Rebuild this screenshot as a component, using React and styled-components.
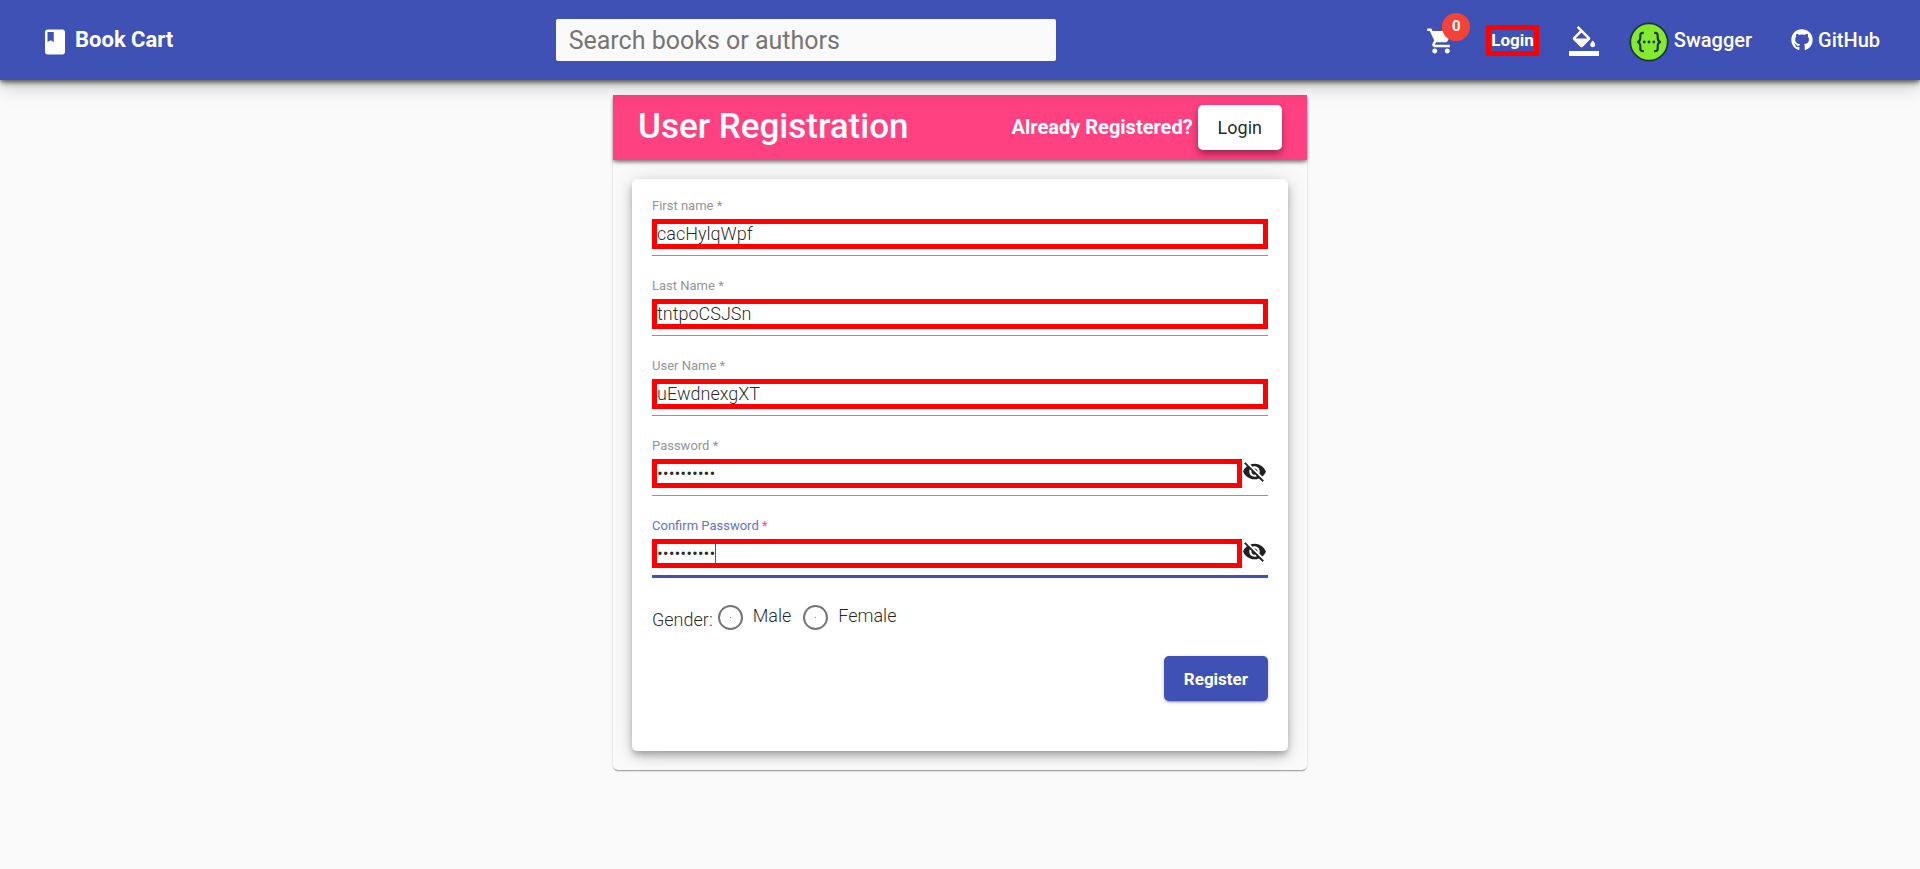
import React from 'react';
import styled, { createGlobalStyle, css } from 'styled-components';
import { MdShoppingCart, MdVisibilityOff } from 'react-icons/md';
import { FaGithub } from 'react-icons/fa';

const indigo = '#3f51b5';
const pink = '#ff4081';
const ink = 'rgba(0, 0, 0, 0.87)';

const GlobalStyle = createGlobalStyle`
  *, *::before, *::after { box-sizing: border-box; }
  body {
    margin: 0;
    background: #fafafa;
    color: ${ink};
    font: 300 18px/24px Roboto, "Liberation Sans", sans-serif;
  }
  button, input { font: inherit; color: inherit; }
`;

const Toolbar = styled.header`
  position: relative;
  z-index: 1;
  display: flex;
  align-items: center;
  justify-content: space-between;
  gap: 20px;
  min-height: 80px;
  padding: 0 40px;
  background: ${indigo};
  color: #fff;
  font-weight: 500;
  box-shadow:
    0 4px 6px -1px rgba(0, 0, 0, 0.4),
    0 2px 3px rgba(0, 0, 0, 0.3),
    0 8px 18px rgba(0, 0, 0, 0.16);
`;

const Brand = styled.a`
  display: flex;
  align-items: center;
  gap: 5px;
  width: 145px;
  color: inherit;
  font-size: 22px;
  font-weight: 700;
  text-decoration: none;
  white-space: nowrap;

  svg { margin-top: 4px; }
`;

const Search = styled.input`
  flex: 0 1 500px;
  min-width: 0;
  height: 42px;
  padding: 0 13px;
  border: 0;
  border-radius: 2px;
  background: #fafafa;
  color: ${ink};
  font-size: 25px;
  font-weight: 400;

  &::placeholder { color: #757575; opacity: 1; }
`;

const Nav = styled.nav`
  display: flex;
  align-items: center;
  gap: 30px;
`;

const IconButton = styled.button`
  position: relative;
  display: flex;
  padding: 2px 0 0;
  border: 0;
  background: none;
  cursor: pointer;
`;

const Badge = styled.span`
  position: absolute;
  top: -11px;
  left: 16px;
  width: 28px;
  height: 28px;
  border-radius: 50%;
  background: #f44336;
  font-size: 15px;
  font-weight: 700;
  line-height: 26px;
  text-align: center;
`;

const highlight = css`
  border: 5px solid #f00;
`;

const NavLogin = styled.a`
  ${highlight}
  color: inherit;
  font-size: 17px;
  font-weight: 700;
  line-height: 21px;
  text-decoration: none;
`;

const NavLink = styled.a`
  display: flex;
  align-items: center;
  gap: 5px;
  padding-right: ${(p) => (p.$spaced ? 9 : 0)}px;
  color: inherit;
  font-size: 20px;
  text-decoration: none;
`;

const Card = styled.main`
  width: calc(100% - 32px);
  max-width: 694px;
  margin: 15px auto 20px;
  padding-bottom: 19px;
  border-radius: 5px;
  box-shadow:
    0 2px 1px -1px rgba(0, 0, 0, 0.2),
    0 1px 1px rgba(0, 0, 0, 0.14),
    0 1px 3px rgba(0, 0, 0, 0.12);
`;

const CardHeader = styled.div`
  display: flex;
  flex-wrap: wrap;
  align-items: center;
  justify-content: space-between;
  min-height: 65px;
  padding: 0 25px;
  background: ${pink};
  color: #fff;
  box-shadow:
    0 4px 5px -2px rgba(0, 0, 0, 0.3),
    0 2px 3px rgba(0, 0, 0, 0.3);
`;

const Title = styled.h1`
  margin: 0;
  padding-bottom: 2px;
  font-size: 35px;
  font-weight: 500;
  line-height: 40px;
`;

const Existing = styled.div`
  display: flex;
  align-items: center;
  gap: 5px;
  font-size: 20px;
  font-weight: 700;
`;

const Prompt = styled.span`
  padding-bottom: 2px;
`;

const Button = styled.button`
  height: 45px;
  padding: 0 20px;
  border: 0;
  border-radius: 5px;
  background: ${(p) => (p.$primary ? indigo : '#fff')};
  color: ${(p) => (p.$primary ? '#fff' : ink)};
  font-size: ${(p) => (p.$primary ? 17 : 18)}px;
  font-weight: ${(p) => (p.$primary ? 700 : 400)};
  cursor: pointer;
  box-shadow: ${(p) =>
    p.$primary
      ? '0 3px 1px -2px rgba(0,0,0,.2), 0 2px 2px rgba(0,0,0,.14), 0 1px 5px rgba(0,0,0,.12)'
      : '0 4px 6px -1px rgba(0,0,0,.3), 0 5px 10px rgba(0,0,0,.16)'};
`;

const Form = styled.form`
  margin: 19px 19px 0;
  padding: 16px 20px 50px;
  border-radius: 5px;
  background: #fff;
  box-shadow:
    0 4px 6px -1px rgba(0, 0, 0, 0.22),
    0 6px 12px rgba(0, 0, 0, 0.15),
    0 1px 22px rgba(0, 0, 0, 0.12);
`;

const Field = styled.div`
  height: 80px;
`;

const Label = styled.label`
  display: block;
  height: 24px;
  font-size: 13px;
  font-weight: 400;
  line-height: 22px;
  color: ${(p) => (p.$active ? '#6472c4' : '#949494')};

  span { color: ${(p) => (p.$active ? pink : 'inherit')}; }
`;

const FieldRow = styled.div`
  position: relative;
  display: flex;
  align-items: flex-start;
  height: ${(p) => (p.$active ? 39 : 37)}px;
  border-bottom: ${(p) => (p.$active ? `3px solid ${indigo}` : '1px solid #949494')};
`;

const FieldInput = styled.input`
  ${highlight}
  flex: 1;
  min-width: 0;
  height: ${(p) => (p.$secret ? 29 : 30)}px;
  padding: 0 0 1px;
  border-radius: 0;
  outline: 0;
  background: #fff;
`;

const Toggle = styled.button`
  display: flex;
  width: 26px;
  padding: 0;
  border: 0;
  background: none;
  cursor: pointer;
`;

const Caret = styled.span`
  position: absolute;
  top: 5px;
  left: 63px;
  width: 1px;
  height: 19px;
  background: ${indigo};
`;

const Gender = styled.fieldset`
  display: flex;
  align-items: center;
  margin: 0;
  padding: 5px 0 0;
  border: 0;
`;

const GenderText = styled.span`
  padding: 8px 5px 0 0;
`;

const Option = styled.label`
  display: flex;
  align-items: center;
  gap: 10px;
  margin-right: 12px;
`;

const Radio = styled.input`
  appearance: none;
  display: grid;
  place-items: center;
  width: 25px;
  height: 25px;
  margin: 2px 0 0;
  border: 2px solid #757575;
  border-radius: 50%;

  &::after {
    content: "";
    width: 1px;
    height: 1px;
    background: ${pink};
  }
  &:checked::after {
    width: 13px;
    height: 13px;
    border-radius: 50%;
  }
`;

const Actions = styled.div`
  display: flex;
  justify-content: flex-end;
  padding-top: 24px;
`;

function BookIcon() {
  return (
    <svg width="30" height="30" viewBox="0 0 24 24" fill="currentColor" aria-hidden="true">
      <path d="M18 2H6c-1.1 0-2 .9-2 2v16c0 1.1.9 2 2 2h12c1.1 0 2-.9 2-2V4c0-1.1-.9-2-2-2zM6 4h5v8l-2.5-1.5L6 12V4z" />
    </svg>
  );
}

function FillIcon() {
  return (
    <svg width="30" height="30" viewBox="0 0 24 24" fill="currentColor" aria-hidden="true">
      <path d="M16.56 8.94L7.62 0 6.21 1.41l2.38 2.38-5.15 5.15c-.59.59-.59 1.54 0 2.12l5.5 5.5c.29.29.68.44 1.06.44s.77-.15 1.06-.44l5.5-5.5c.59-.58.59-1.53 0-2.12zM5.21 10L10 5.21 14.79 10H5.21zM19 11.5s-2 2.17-2 3.5c0 1.1.9 2 2 2s2-.9 2-2c0-1.33-2-3.5-2-3.5zM0 20h24v4H0z" />
    </svg>
  );
}

const SwaggerMark = styled.svg`
  margin-top: 4px;
`;

function SwaggerIcon() {
  return (
    <SwaggerMark width="40" height="40" viewBox="0 0 40 40" aria-hidden="true">
      <circle cx="20" cy="20" r="18.7" fill="#85ea2d" stroke="#173647" strokeWidth="1.8" />
      <g fill="none" stroke="#173647" strokeWidth="2.2">
        <path d="M14.8 10.8C11.5 10.6 11.2 12 11.3 14.5C11.5 17.8 11 19.6 8.3 20C11 20.4 11.5 22.2 11.3 25.5C11.2 28 11.5 29.4 14.8 29.2" />
        <path d="M25.2 10.8C28.5 10.6 28.8 12 28.7 14.5C28.5 17.8 29 19.6 31.7 20C29 20.4 28.5 22.2 28.7 25.5C28.8 28 28.5 29.4 25.2 29.2" />
      </g>
      <g fill="#173647">
        <circle cx="15.2" cy="20" r="1.4" />
        <circle cx="20" cy="20" r="1.4" />
        <circle cx="24.8" cy="20" r="1.4" />
      </g>
    </SwaggerMark>
  );
}

function TextField({ id, label, value, secret, active }) {
  return (
    <Field>
      <Label htmlFor={id} $active={active}>
        {label} <span>*</span>
      </Label>
      <FieldRow $active={active}>
        <FieldInput
          id={id}
          type={secret ? 'password' : 'text'}
          defaultValue={value}
          $secret={secret}
          required
        />
        {active && <Caret />}
        {secret && (
          <Toggle type="button" aria-label={`Show ${label}`}>
            <MdVisibilityOff size={25} />
          </Toggle>
        )}
      </FieldRow>
    </Field>
  );
}

export default function App() {
  return (
    <>
      <GlobalStyle />
      <Toolbar>
        <Brand href="#home">
          <BookIcon />
          Book Cart
        </Brand>
        <Search type="search" placeholder="Search books or authors" aria-label="Search books or authors" />
        <Nav>
          <IconButton type="button" aria-label="Cart">
            <MdShoppingCart size={30} />
            <Badge>0</Badge>
          </IconButton>
          <NavLogin href="#login">Login</NavLogin>
          <IconButton type="button" aria-label="Theme">
            <FillIcon />
          </IconButton>
          <NavLink href="#swagger" $spaced>
            <SwaggerIcon />
            Swagger
          </NavLink>
          <NavLink href="#github">
            <FaGithub size={22} />
            GitHub
          </NavLink>
        </Nav>
      </Toolbar>
      <Card>
        <CardHeader>
          <Title>User Registration</Title>
          <Existing>
            <Prompt>Already Registered?</Prompt>
            <Button type="button">Login</Button>
          </Existing>
        </CardHeader>
        <Form>
          <TextField id="first" label="First name" value="cacHylqWpf" />
          <TextField id="last" label="Last Name" value="tntpoCSJSn" />
          <TextField id="user" label="User Name" value="uEwdnexgXT" />
          <TextField id="password" label="Password" value="aB3dE6gH9j" secret />
          <TextField id="confirm" label="Confirm Password" value="aB3dE6gH9j" secret active />
          <Gender aria-label="Gender">
            <GenderText>Gender:</GenderText>
            <Option>
              <Radio type="radio" name="gender" value="Male" />
              Male
            </Option>
            <Option>
              <Radio type="radio" name="gender" value="Female" />
              Female
            </Option>
          </Gender>
          <Actions>
            <Button type="submit" $primary>Register</Button>
          </Actions>
        </Form>
      </Card>
    </>
  );
}
